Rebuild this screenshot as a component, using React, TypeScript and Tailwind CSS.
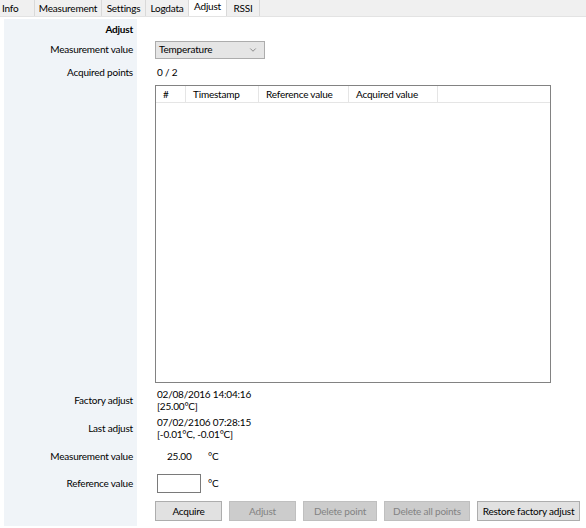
import { ChevronDown } from "lucide-react";

const tabs = [
    { name: "Info", w: "w-[35px] justify-start pl-[2px]" },
    { name: "Measurement", w: "w-[67px] justify-center" },
    { name: "Settings", w: "w-[44px] justify-center" },
    { name: "Logdata", w: "w-[43px] justify-center" },
    { name: "Adjust", w: "w-[38px] justify-center", active: true },
    { name: "RSSI", w: "w-[33px] justify-center" },
];

const columns = [
    { name: "#", w: "w-[30px]" },
    { name: "Timestamp", w: "w-[73px]" },
    { name: "Reference value", w: "w-[90px]" },
    { name: "Acquired value", w: "w-[89px]" },
];

const Label = ({ text, bold, h }: { text?: string; bold?: boolean; h: string }) => (
    <div className={`${h} bg-[#f0f4f8] flex items-center justify-end pr-[4px] whitespace-nowrap ${bold ? "font-bold" : ""}`}>
        {text}
    </div>
);

const Btn = ({ text, w, disabled }: { text: string; w: string; disabled?: boolean }) => (
    <div
        className={`${w} h-[20px] flex items-center justify-center border whitespace-nowrap ${
            disabled ? "bg-[#cccccc] border-[#bfbfbf] text-[#838383]" : "bg-[#e1e1e1] border-[#adadad] text-black"
        }`}
    >
        {text}
    </div>
);

export default function App() {
    return (
        <div
            className="w-[586px] h-[528px] bg-white text-[10px] tracking-[-0.2px] text-black overflow-hidden"
            style={{ fontFamily: "Lato, sans-serif" }}
        >
            {/* Tab strip */}
            <div className="h-[17px] bg-[#f0f0f0] border-b border-[#e3e3e3] flex items-end">
                {tabs.map((t) => (
                    <div
                        key={t.name}
                        className={`${t.w} flex items-center border-r border-[#d9d9d9] whitespace-nowrap ${
                            t.active ? "h-[17px] bg-white pb-[3px]" : "h-[16px]"
                        }`}
                    >
                        {t.name}
                    </div>
                ))}
            </div>

            {/* Adjust page */}
            <div className="grid grid-cols-[133px_1fr] gap-x-[18px] pl-[4px] pt-[2px]">
                <Label text="Adjust" bold h="h-[20px]" />
                <div />

                <Label text="Measurement value" h="h-[21px]" />
                <div className="flex items-center">
                    <div className="w-[110px] h-[18px] bg-[#e5e5e5] border border-[#acacac] flex items-center justify-between pl-[3px] pr-[6px]">
                        <span>Temperature</span>
                        <ChevronDown className="w-[10px] h-[10px] text-[#555]" strokeWidth={1.5} />
                    </div>
                </div>

                <Label text="Acquired points" h="h-[24px]" />
                <div className="flex items-center pl-[2px]">0 / 2</div>

                <Label h="h-[302px]" />
                <div className="pt-[1px]">
                    <div className="w-[396px] h-[298px] border border-[#828282] bg-white">
                        <div className="h-[17px] flex border-b border-[#e5e5e5]">
                            {columns.map((c) => (
                                <div key={c.name} className={`${c.w} border-r border-[#e5e5e5] flex items-center pl-[7px] whitespace-nowrap`}>
                                    {c.name}
                                </div>
                            ))}
                        </div>
                    </div>
                </div>

                <Label text="Factory adjust" h="h-[28px]" />
                <div className="flex flex-col justify-center leading-[12px] pl-[2px]">
                    <span>02/08/2016 14:04:16</span>
                    <span>[25.00°C]</span>
                </div>

                <Label text="Last adjust" h="h-[28px]" />
                <div className="flex flex-col justify-center leading-[12px] pl-[2px]">
                    <span>07/02/2106 07:28:15</span>
                    <span>[-0.01°C, -0.01°C]</span>
                </div>

                <Label text="Measurement value" h="h-[28px]" />
                <div className="flex items-center">
                    <span className="w-[53px] pl-[12px]">25.00</span>
                    <span>°C</span>
                </div>

                <Label text="Reference value" h="h-[26px]" />
                <div className="flex items-center">
                    <div className="w-[44px] h-[19px] border border-[#7a7a7a] bg-white ml-[2px] mr-[7px]" />
                    <span>°C</span>
                </div>

                <Label h="h-[30px]" />
                <div className="flex items-center gap-[7px]">
                    <Btn text="Acquire" w="w-[67px]" />
                    <Btn text="Adjust" w="w-[67px]" disabled />
                    <Btn text="Delete point" w="w-[74px]" disabled />
                    <Btn text="Delete all points" w="w-[86px]" disabled />
                    <Btn text="Restore factory adjust" w="w-[103px]" />
                </div>
            </div>
        </div>
    );
}
